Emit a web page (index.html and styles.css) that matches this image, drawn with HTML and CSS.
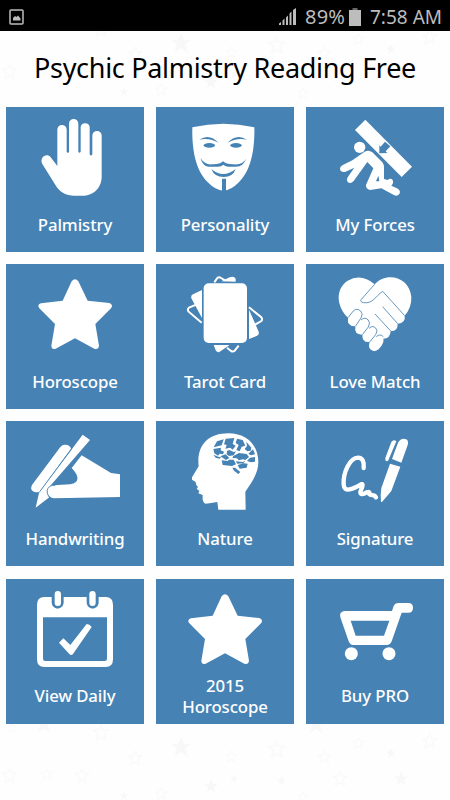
FILE: index.html
```html
<!DOCTYPE html>
<html lang="en">
<head>
    <meta charset="UTF-8">
    <meta name="viewport" content="width=device-width, initial-scale=1.0">
    <title>Psychic Palmistry Reading Free</title>
    <link rel="stylesheet" href="styles.css">
</head>
<body>
    <svg class="defs" width="0" height="0">
        <symbol id="star" viewBox="549 48 252 252">
            <path d="M665 73Q675 60 685 73L713 131L778 138Q791 144 783 154L736 201L747 266Q745 279 733 275L675 244L617 275Q605 279 604 266L615 201L568 154Q560 143 573 139L638 131Z"/>
        </symbol>
        <symbol id="solid" viewBox="-10 -10 20 20">
            <path d="M0-10L3-3L10-3L4 2L7 10L0 5L-7 10L-4 2L-10-3L-3-3Z"/>
        </symbol>
        <symbol id="outline" viewBox="-11 -11 22 22">
            <path d="M0-9L3-3L9-3L4 2L6 9L0 5L-6 9L-4 2L-9-3L-3-3Z" fill="none" stroke="currentColor" stroke-width="2"/>
        </symbol>
    </svg>

    <header class="status-bar">
        <svg class="status-image" width="15" height="16" viewBox="0 0 15 16">
            <rect x="1" y="1" width="13" height="14" rx="1" fill="none" stroke="#bdbdbd" stroke-width="1.5"/>
            <path d="M4 11.500V9L6 7L7.500 8L9 6.500L11.500 9.500V11.500Z" fill="#bdbdbd"/>
        </svg>
        <div class="status-info">
            <svg width="17" height="17" viewBox="0 0 17 17" fill="#bdbdbd">
                <path d="M0 17V15.500L2 14V17ZM3.500 17V12.500L5.500 10.500V17ZM7 17V9.500L9 7.500V17ZM10.500 17V5.500L12.500 3.500V17ZM14 17V2L17 0V17Z"/>
            </svg>
            <span class="percent">89%</span>
            <svg class="battery" width="12" height="18" viewBox="0 0 12 18">
                <path d="M3.500 0H8.500V2H3.500Z" fill="#666"/>
                <path d="M0 2H12V18H0Z" fill="#bdbdbd"/>
            </svg>
            <span class="clock">7:58 AM</span>
        </div>
    </header>

    <main class="home">
        <svg class="stars" width="450" height="769" viewBox="0 31 450 769">
            <defs>
                <g id="sky">
                    <use href="#solid" x="171" y="734" width="20" height="26"/>
                    <use href="#solid" x="204" y="778" width="14" height="16"/>
                    <use href="#solid" x="230" y="774" width="8" height="9"/>
                    <use href="#solid" x="277" y="775" width="9" height="11"/>
                    <use href="#solid" x="386" y="747" width="10" height="12"/>
                    <use href="#solid" x="394" y="770" width="14" height="17"/>
                    <use href="#solid" x="119" y="791" width="10" height="9"/>
                    <use href="#solid" x="35" y="715" width="18" height="18"/>
                    <use href="#solid" x="307" y="715" width="18" height="19"/>
                    <use href="#outline" x="92" y="723" width="18" height="19"/>
                    <use href="#outline" x="127" y="749" width="16" height="18"/>
                    <use href="#outline" x="225" y="748" width="13" height="17"/>
                    <use href="#outline" x="267" y="737" width="19" height="24"/>
                    <use href="#outline" x="317" y="749" width="15" height="16"/>
                    <use href="#outline" x="352" y="736" width="13" height="14"/>
                    <use href="#outline" x="421" y="731" width="17" height="20"/>
                    <use href="#outline" x="1" y="765" width="17" height="21"/>
                    <use href="#outline" x="40" y="766" width="13" height="16"/>
                    <use href="#outline" x="74" y="766" width="16" height="19"/>
                    <use href="#outline" x="332" y="769" width="16" height="19"/>
                    <use href="#outline" x="154" y="786" width="14" height="16"/>
                    <use href="#outline" x="297" y="791" width="12" height="12"/>
                    <use href="#outline" x="7" y="722" width="11" height="11"/>
                </g>
            </defs>
            <use href="#sky"/>
            <use href="#sky" y="-704"/>
        </svg>

        <h1>Psychic Palmistry Reading Free</h1>

        <div class="grid">
            <a class="tile">
                <svg class="icon" viewBox="99 48 252 252">
                    <path d="M172 198V89A14 14 0 0 1 200 89V155Q203 162 207 155V71A14 14 0 0 1 235 71V155Q238 161 242 155V80A14 14 0 0 1 269 80V163Q273 170 277 163V107A14 14 0 0 1 305 107V230C305 267 276 287 249 287H222C198 287 181 276 170 261L127 192C117 173 140 157 152 172Z"/>
                </svg>
                <span class="label">Palmistry</span>
            </a>
            <a class="tile">
                <svg class="icon" viewBox="99 48 252 252">
                    <path d="M127 82Q220 61 313 82C315 160 298 219 265 248Q244 270 220 272Q196 270 175 248C142 219 125 160 127 82Z"/>
                    <g class="cut">
                        <path d="M148 119Q179 99 206 129Q180 113 148 119ZM232 129Q259 99 291 119Q259 113 232 129Z"/>
                        <ellipse cx="178" cy="136" rx="17" ry="7"/>
                        <ellipse cx="258" cy="136" rx="17" ry="7"/>
                        <path d="M151 174Q165 195 185 193Q210 194 219 184Q229 194 253 193Q277 195 289 176Q278 203 253 200H234Q224 199 220 194Q214 200 204 200H180Q160 202 151 174Z"/>
                        <path d="M184 207Q219 237 257 207Q249 231 221 231Q193 231 184 207ZM216 236H228V274H216Z"/>
                    </g>
                </svg>
                <span class="label">Personality</span>
            </a>
            <a class="tile">
                <svg class="icon" viewBox="99 48 252 252">
                    <path d="M165 90L196 59L336 200L305 231Z"/>
                    <path class="cut" d="M233 131L238 136L238 160L262 159L257 154L271 139L255 125L242 140Z"/>
                    <circle cx="179" cy="142" r="17"/>
                    <path d="M194 155Q206 148 217 157L247 187Q252 193 252 203V237L263 240Q271 233 278 240Q282 249 274 257L294 266Q303 273 298 282Q293 289 283 286L244 265L210 270Q197 267 198 255L220 205L202 186L161 243Q151 254 143 246Q138 238 145 229L163 203L135 216Q121 217 120 207Q119 201 127 196L157 181ZM235 227L228 244L238 244Z" fill-rule="evenodd"/>
                </svg>
                <span class="label">My Forces</span>
            </a>

            <a class="tile">
                <svg class="icon"><use href="#star"/></svg>
                <span class="label">Horoscope</span>
            </a>
            <a class="tile">
                <svg class="icon" viewBox="99 46 252 252">
                    <g class="line">
                        <path d="M193 74L202 61Q207 57 213 61L226 69M155 134L117 150Q111 155 116 162L155 195M297 149L333 178Q339 184 334 190L298 211M231 270L243 280Q249 283 254 279L266 264"/>
                    </g>
                    <path d="M214 71L239 59Q252 54 257 63V72ZM156 97V181L124 122Q122 113 129 110ZM297 156L326 222Q329 231 320 235L297 244ZM191 262H239L207 284Q201 285 197 278Z"/>
                    <rect x="161" y="77" width="130" height="179" rx="15"/>
                </svg>
                <span class="label">Tarot Card</span>
            </a>
            <a class="tile">
                <svg class="icon" viewBox="99 46 252 252">
                    <path d="M224 80C258 41 330 57 334 119Q335 151 314 174Q318 195 293 198Q294 221 272 220Q271 243 250 243Q254 255 236 275Q222 286 211 275Q204 267 209 253Q186 256 187 231Q162 232 166 206Q140 206 144 180C108 145 106 93 143 69Q184 46 224 80Z"/>
                    <path class="seam" d="M224 80L184 125Q178 132 191 135C218 139 225 117 248 101L314 174M248 147L293 198M225 169L272 220M144 180L160 160Q170 150 182 160Q191 168 183 181L166 206M183 187Q193 177 204 186Q213 195 205 208L187 231M207 212Q218 202 227 211Q235 218 227 231L209 253M229 237Q240 227 250 237"/>
                </svg>
                <span class="label">Love Match</span>
            </a>

            <a class="tile">
                <svg class="icon" viewBox="99 46 252 252">
                    <path d="M181 97Q187 89 197 90Q210 91 213 102L119 231Q106 235 98 229Q90 223 96 211ZM248 60L270 76L151 213Q141 221 142 235L148 248L107 279L117 235Z"/>
                    <path d="M215 160L245 122L333 175L360 179V247L160 251C135 245 138 212 161 212L211 209C239 205 239 184 215 160Z"/>
                    <path class="seam" d="M119 231L215 102M148 248C134 228 143 211 166 212"/>
                </svg>
                <span class="label">Handwriting</span>
            </a>
            <a class="tile">
                <svg class="icon" viewBox="99 46 252 252">
                    <path d="M146 155C139 95 172 56 235 56C290 56 325 91 325 143C325 179 301 208 286 231L287 285H205L202 262Q183 266 167 267Q156 266 158 241L145 236L148 229L140 222L144 217Q137 213 137 202L126 195V188Z"/>
                    <g class="cut">
                        <path d="M201 80L221 74L215 92L191 98ZM227 72L253 70L248 88L257 93L248 105L241 99L226 102L230 91L222 89ZM261 72L278 76L286 93L275 96L269 110L259 106L266 91L257 85ZM289 81L304 99L302 108L292 110L284 103L291 94ZM190 103L213 99L212 107L222 111L219 119L209 117L204 123L193 116ZM238 106L251 112L258 110L251 122L237 124L230 119L231 109ZM267 115L290 118L297 127L286 136L279 134L266 137L261 131L247 130L250 124ZM309 104L315 119L303 122L295 117ZM300 129L315 127V141L303 143L291 139ZM211 125L227 119L238 130L228 136ZM190 120L207 127L213 128L209 132L197 129ZM215 137L233 139L237 135L251 135L258 149L246 154L218 151ZM257 140L279 142L286 138L280 146L262 147ZM263 151L281 146L293 147L290 159L269 162ZM247 159H255L271 172L265 178L252 168Z"/>
                    </g>
                </svg>
                <span class="label">Nature</span>
            </a>
            <a class="tile">
                <svg class="icon" viewBox="99 46 252 252">
                    <path d="M274 82Q281 73 289 80L265 137Q261 143 256 137V130ZM276 133L294 84Q304 67 319 74Q328 80 322 94L304 144ZM270 147L301 156L274 229L246 262H243L242 242L244 220Z"/>
                    <path class="scrawl" d="M191 160Q194 130 174 129C149 130 129 174 131 209C132 235 158 224 183 209Q192 205 184 224C175 242 189 241 200 233Q211 229 208 239C214 245 221 236 228 248"/>
                </svg>
                <span class="label">Signature</span>
            </a>

            <a class="tile">
                <svg class="icon" viewBox="99 48 252 252">
                    <path d="M133 75H155V90C155 116 191 116 191 90V75H260V90C260 116 296 116 296 90V75H317Q339 75 339 98V262Q339 285 317 285H133Q111 285 111 262V98Q111 75 133 75ZM129 136V260Q129 267 136 267H314Q321 267 321 260V136Z" fill-rule="evenodd"/>
                    <rect x="164" y="57" width="19" height="45" rx="9.500"/>
                    <rect x="268" y="57" width="19" height="45" rx="9.500"/>
                    <path d="M177 212L190 199L211 219L260 156Q269 156 275 165L219 246Q214 252 208 246Z"/>
                </svg>
                <span class="label">View Daily</span>
            </a>
            <a class="tile">
                <svg class="icon"><use href="#star"/></svg>
                <span class="label">2015<br>Horoscope</span>
            </a>
            <a class="tile">
                <svg class="icon" viewBox="99 48 252 252">
                    <path d="M133 117H276L281 102Q285 93 295 93H325Q339 93 339 107Q339 122 325 122H305L275 208Q271 219 260 219H159Q150 219 146 208L121 136Q117 119 133 117ZM152 146L167 191H252L268 146Z" fill-rule="evenodd"/>
                    <circle cx="154" cy="245" r="19.500"/>
                    <circle cx="267" cy="245" r="19.500"/>
                </svg>
                <span class="label">Buy PRO</span>
            </a>
        </div>
    </main>
</body>
</html>
```
FILE: styles.css
```css
body {
    font-family: "Noto Sans", "Open Sans", sans-serif;
    background-color: #fefefe;
    margin: 0;
    width: 450px;
    height: 800px;
    overflow: hidden;
}

.defs {
    position: absolute;
}

.status-bar {
    box-sizing: border-box;
    display: flex;
    justify-content: space-between;
    align-items: center;
    height: 31px;
    padding: 2px 8px 0 9px;
    background-color: #000;
    color: #bdbdbd;
    font-size: 19px;
}

.status-info {
    display: flex;
    align-items: center;
    line-height: 28px;
}

.percent {
    width: 40px;
    margin-left: 9px;
    font-size: 20px;
    letter-spacing: 0.2px;
}

.battery {
    margin: 0 9px 0 4px;
}

.clock {
    width: 72px;
    white-space: nowrap;
}

.home {
    position: relative;
    height: 769px;
}

/* faint backdrop behind the tiles */
.stars {
    position: absolute;
    top: 0;
    left: 0;
    fill: #f8f8f8;
    color: #fafafa;
}

h1 {
    position: relative;
    height: 76px;
    margin: 0;
    font-size: 27px;
    font-weight: 400;
    line-height: 73px;
    letter-spacing: -0.3px;
    text-align: center;
    white-space: nowrap;
    color: #000;
}

.grid {
    position: relative;
    display: grid;
    grid-template-columns: repeat(3, 138px);
    grid-auto-rows: 145px;
    gap: 12.2px 12px;
    padding: 0 6px;
}

.tile {
    display: flex;
    flex-direction: column;
    align-items: center;
    background-color: #4682b4;
    color: #fff;
}

.icon {
    flex: none;
    width: 84px;
    height: 84px;
    margin-top: 9px;
    fill: #fff;
    overflow: visible;
}

.cut {
    fill: #4682b4;
}

.line,
.scrawl {
    fill: none;
    stroke: #fff;
    stroke-width: 6;
}

.scrawl {
    stroke-width: 13;
    stroke-linecap: round;
    stroke-linejoin: round;
}

.seam {
    fill: none;
    stroke: #4682b4;
    stroke-width: 2.5;
}

.label {
    display: flex;
    align-items: center;
    flex: none;
    height: 48px;
    font-size: 16.8px;
    font-weight: 500;
    line-height: 21px;
    letter-spacing: -0.1px;
    text-align: center;
}
```
